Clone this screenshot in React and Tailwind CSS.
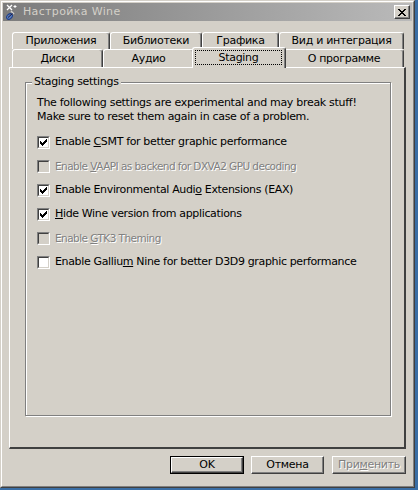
import React from "react";

function CheckMark() {
  return (
    <svg width="7" height="7" viewBox="0 0 7 7" shapeRendering="crispEdges" fill="#000">
      <rect x="6" y="0" width="1" height="1" />
      <rect x="5" y="1" width="2" height="1" />
      <rect x="0" y="2" width="1" height="1" />
      <rect x="4" y="2" width="3" height="1" />
      <rect x="0" y="3" width="2" height="1" />
      <rect x="3" y="3" width="3" height="1" />
      <rect x="0" y="4" width="5" height="1" />
      <rect x="1" y="5" width="3" height="1" />
      <rect x="2" y="6" width="1" height="1" />
    </svg>
  );
}

function CloseGlyph() {
  return (
    <svg width="8" height="7" viewBox="0 0 8 7" shapeRendering="crispEdges" fill="#000">
      <rect x="0" y="0" width="2" height="1" />
      <rect x="6" y="0" width="2" height="1" />
      <rect x="1" y="1" width="2" height="1" />
      <rect x="5" y="1" width="2" height="1" />
      <rect x="2" y="2" width="4" height="1" />
      <rect x="3" y="3" width="2" height="1" />
      <rect x="2" y="4" width="4" height="1" />
      <rect x="1" y="5" width="2" height="1" />
      <rect x="5" y="5" width="2" height="1" />
      <rect x="0" y="6" width="2" height="1" />
      <rect x="6" y="6" width="2" height="1" />
    </svg>
  );
}

function WineIcon() {
  return (
    <svg width="16" height="16" viewBox="0 0 16 16">
      <path d="M2 1 L7 6 M7 1 L2 6" stroke="#ffffff" strokeWidth="1.3" />
      <path d="M10 1 L10 4 M8.5 2.5 L11.5 2.5" stroke="#ffffff" strokeWidth="1" />
      <path d="M6 7 L9 10" stroke="#d0d0d0" strokeWidth="1.4" />
      <ellipse cx="4.5" cy="12.5" rx="3.2" ry="2.3" transform="rotate(-40 4.5 12.5)" fill="#5a7fc0" stroke="#1e3f8a" strokeWidth="1" />
      <path d="M3 13.5 L7.5 9.5" stroke="#1a1a40" strokeWidth="1" />
    </svg>
  );
}

function Checkbox({ checked, disabled }) {
  return (
    <div className="w-[13px] h-[13px] shrink-0 flex border border-t-[#808080] border-l-[#808080] border-r-white border-b-white">
      <div
        className={
          disabled
            ? "flex-1 flex items-center justify-center border border-t-[#404040] border-l-[#404040] border-r-[#d4d0c8] border-b-[#d4d0c8] bg-[#d4d0c8]"
            : "flex-1 flex items-center justify-center border border-t-[#404040] border-l-[#404040] border-r-[#d4d0c8] border-b-[#d4d0c8] bg-white"
        }
      >
        {checked && <CheckMark />}
      </div>
    </div>
  );
}

function Tab({ w, h, children }) {
  return (
    <div
      className="shrink-0 flex items-center justify-center bg-[#d4d0c8] border-l border-t border-r border-l-white border-t-white border-r-[#404040] rounded-t-[3px] shadow-[inset_-1px_0_0_#808080] text-black"
      style={{ width: w, height: h }}
    >
      {children}
    </div>
  );
}

function Row({ checked, disabled, children }) {
  return (
    <div className="h-[24px] flex items-center gap-[5px]">
      <Checkbox checked={checked} disabled={disabled} />
      {disabled ? (
        <span className="text-[#808080] [text-shadow:1px_1px_0_#ffffff] text-[10.5px] tracking-[-0.55px]">{children}</span>
      ) : (
        <span className="text-black tracking-[-0.35px]">{children}</span>
      )}
    </div>
  );
}

function Button({ w, children, isDefault }) {
  const inner = (
    <div className="flex-1 flex items-center justify-center border border-t-white border-l-white border-r-[#404040] border-b-[#404040] shadow-[inset_-1px_-1px_0_#808080] bg-[#d4d0c8]">
      {children}
    </div>
  );
  return (
    <div
      className={isDefault ? "h-[18px] flex border border-black" : "h-[18px] flex"}
      style={{ width: w }}
    >
      {inner}
    </div>
  );
}

export default function App() {
  return (
    <div className="w-[418px] h-[490px] bg-[#3a6ea5] font-['DejaVu_Sans',sans-serif] text-[11px] leading-[14px] tracking-[-0.3px] text-black overflow-hidden">
      <div className="w-[415px] h-[488px] flex border border-t-[#d4d0c8] border-l-[#d4d0c8] border-r-[#404040] border-b-[#404040]">
        <div className="flex-1 flex flex-col p-px bg-[#d4d0c8] border border-t-white border-l-white border-r-[#808080] border-b-[#808080]">
          {/* title bar */}
          <div className="h-[18px] shrink-0 flex items-center pl-[2px] pr-[2px] bg-linear-to-r from-[#7c7c7c] to-[#bababa]">
            <WineIcon />
            <span className="ml-[2px] text-[#d4d0c8] text-[11px] tracking-[0.35px]">Настройка Wine</span>
            <div className="ml-auto w-[16px] h-[14px] flex border border-t-white border-l-white border-r-[#404040] border-b-[#404040]">
              <div className="flex-1 flex items-center justify-center bg-[#d4d0c8] shadow-[inset_-1px_-1px_0_#808080]">
                <CloseGlyph />
              </div>
            </div>
          </div>

          {/* tab control */}
          <div className="mt-[11px] ml-[6px] w-[397px] flex flex-col">
            <div className="flex pl-[3px] h-[17px]">
              <Tab w={98} h={17}>Приложения</Tab>
              <Tab w={92} h={17}>Библиотеки</Tab>
              <Tab w={77} h={17}>Графика</Tab>
              <Tab w={125} h={17}>Вид и интеграция</Tab>
            </div>
            <div className="flex pl-[3px] h-[18px] items-start">
              <Tab w={91} h={18}>Диски</Tab>
              <Tab w={91} h={18}>Аудио</Tab>
              <div className="relative z-10 -mt-[2px] -mx-[2px] w-[94px] h-[21px] shrink-0 flex pt-[2px] pb-[3px] pl-[2px] pr-[3px] bg-[#d4d0c8] border-l border-t border-r border-l-white border-t-white border-r-[#404040] rounded-t-[3px] shadow-[inset_-1px_0_0_#808080]">
                <div className="flex-1 flex items-center justify-center border border-dotted border-black">Staging</div>
              </div>
              <Tab w={120} h={18}>О программе</Tab>
            </div>

            {/* panel */}
            <div className="h-[382px] flex flex-col pt-[14px] pl-[15px] pr-[13px] border-l border-t border-r-2 border-b-2 border-l-white border-t-white border-r-[#404040] border-b-[#404040]">
              <div className="relative h-[334px] border border-[#808080] shadow-[inset_1px_1px_0_#ffffff,1px_1px_0_#ffffff] pt-[13px] pl-[11px]">
                <span className="absolute -top-[8px] left-[6px] px-[2px] bg-[#d4d0c8]">Staging settings</span>
                <div>The following settings are experimental and may break stuff!</div>
                <div>Make sure to reset them again in case of a problem.</div>
                <div className="mt-[6px] flex flex-col">
                  <Row checked>
                    Enable <u>C</u>SMT for better graphic performance
                  </Row>
                  <Row disabled>
                    Enable <u>V</u>AAPI as backend for DXVA2 GPU decoding
                  </Row>
                  <Row checked>
                    Enable Environmental Audi<u>o</u> Extensions (EAX)
                  </Row>
                  <Row checked>
                    <u>H</u>ide Wine version from applications
                  </Row>
                  <Row disabled>
                    Enable <u>G</u>TK3 Theming
                  </Row>
                  <Row>
                    Enable Galliu<u>m</u> Nine for better D3D9 graphic performance
                  </Row>
                </div>
              </div>
            </div>

            {/* buttons */}
            <div className="mt-[7px] flex justify-end">
              <Button w={74} isDefault>OK</Button>
              <div className="w-[7px]" />
              <Button w={73}>Отмена</Button>
              <div className="w-[8px]" />
              <Button w={74}>
                <span className="text-[#808080] [text-shadow:1px_1px_0_#ffffff]">
                  При<u>м</u>енить
                </span>
              </Button>
            </div>
          </div>
        </div>
      </div>
    </div>
  );
}
